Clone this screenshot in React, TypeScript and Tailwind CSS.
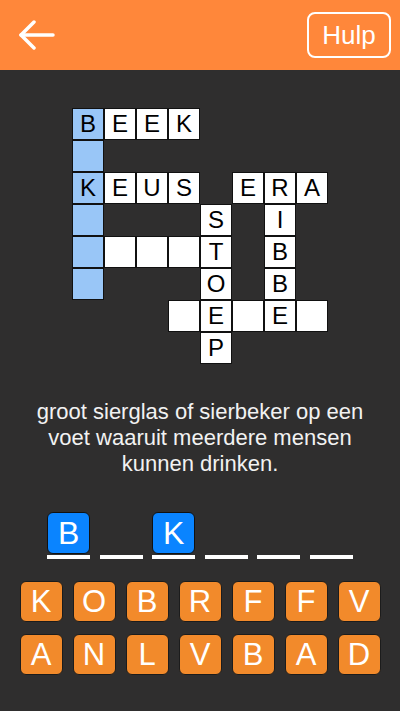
import React from 'react';

const GRID = [
  'BEEK....',
  '_.......',
  'KEUS.ERA',
  '_...S.I.',
  '____T.B.',
  '_...O.B.',
  '..._E_E_',
  '....P...',
];

const ANSWER_SLOTS = ['B', '', 'K', '', '', ''];

const KEYS = [
  ['K', 'O', 'B', 'R', 'F', 'F', 'V'],
  ['A', 'N', 'L', 'V', 'B', 'A', 'D'],
];

function Cell({ ch, row, col }: { ch: string; row: number; col: number }) {
  if (ch === '.') return <div className="w-8 h-8" />;
  const blue = col === 0 && row <= 5;
  return (
    <div
      className={`w-8 h-8 border border-[#111] flex items-center justify-center text-[24px] leading-none text-black ${
        blue ? 'bg-[#99c6f7]' : 'bg-white'
      }`}
    >
      {ch === '_' ? '' : ch}
    </div>
  );
}

export default function App() {
  return (
    <div
      className="w-[400px] h-[711px] bg-[#2f2e2e] flex flex-col overflow-hidden"
      style={{ fontFamily: '"Liberation Sans", Arial, sans-serif' }}
    >
      <header className="h-[70px] bg-[#ff873a] flex items-center justify-between pl-[19px] pr-[9px] shrink-0">
        <svg width="36" height="32" viewBox="0 0 36 32" fill="none" stroke="white" strokeWidth="3.5" strokeLinecap="round" strokeLinejoin="round">
          <path d="M2 16 H34" />
          <path d="M15 3 L2 16 L15 29" />
        </svg>
        <button className="w-[84px] h-[46px] border-[2.5px] border-white rounded-lg text-white text-[26px] leading-none flex items-center justify-center">
          Hulp
        </button>
      </header>

      <div className="mt-[38px] mx-auto grid grid-cols-[repeat(8,32px)] grid-rows-[repeat(8,32px)]">
        {GRID.map((line, r) =>
          line.split('').map((ch, c) => <Cell key={`${r}-${c}`} ch={ch} row={r} col={c} />)
        )}
      </div>

      <p className="mt-[35px] px-5 text-center text-[22px] leading-[26px] text-[#f2f2f2]">
        groot sierglas of sierbeker op een voet waaruit meerdere mensen kunnen drinken.
      </p>

      <div className="mt-[35px] flex justify-center gap-[9.5px]">
        {ANSWER_SLOTS.map((ch, i) => (
          <div key={i} className="w-[43px] h-[47px] flex flex-col justify-end">
            {ch && (
              <div className="h-[42px] mb-px rounded-md border border-[#111] bg-[#0a84ff] text-white text-[32px] leading-none flex items-center justify-center">
                {ch}
              </div>
            )}
            <div className="h-1 bg-white" />
          </div>
        ))}
      </div>

      <div className="mt-[22px] flex flex-col items-center gap-3">
        {KEYS.map((row, r) => (
          <div key={r} className="flex gap-[10px]">
            {row.map((k, i) => (
              <div
                key={i}
                className="w-[43px] h-[41px] rounded-md border-[1.5px] border-[#1c1c1c] bg-[#f28a2b] text-white text-[31px] leading-none flex items-center justify-center"
              >
                {k}
              </div>
            ))}
          </div>
        ))}
      </div>
    </div>
  );
}
